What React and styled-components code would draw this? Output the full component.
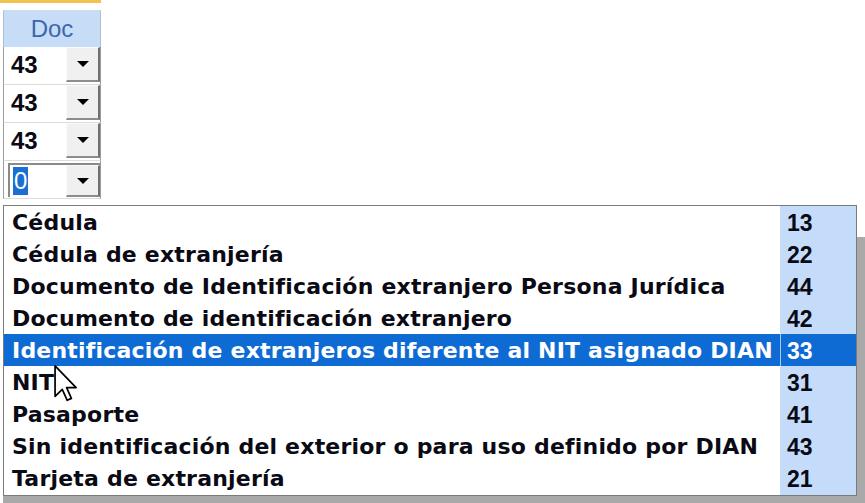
import styled, { createGlobalStyle } from "styled-components";

const GlobalStyle = createGlobalStyle`
  html, body {
    margin: 0;
    padding: 0;
    background: #fff;
  }
  body {
    font-family: "Liberation Sans", Arial, sans-serif;
  }
`;

const Screen = styled.div`
  position: relative;
  width: 865px;
  height: 503px;
  overflow: hidden;
  background: #fff;
`;

const Column = styled.div`
  width: 101px;
  border-top: 3px solid #f1c24f;
  padding-top: 7px;
`;

const HeaderCell = styled.div`
  box-sizing: border-box;
  height: 37px;
  margin-left: 3px;
  border-left: 1px solid #aebfd4;
  border-right: 1px solid #aebfd4;
  border-top: 1px solid #d3dbe5;
  background: #c7ddf7;
  display: flex;
  align-items: center;
  justify-content: center;
  font-size: 24px;
  color: #3b67ad;
`;

const Row = styled.div`
  box-sizing: border-box;
  height: 38px;
  width: 98px;
  margin-left: 3px;
  border-left: 1px solid #9c9c9c;
  border-right: 1px solid #9c9c9c;
  border-bottom: 1px solid #dcdcdc;
  display: flex;
`;

const Combo = styled.div`
  flex: 1;
  display: flex;
  margin: ${({ sunken }) => (sunken ? "2px 0 1px 4px" : "0 0 2px 0")};
  border-top: ${({ sunken }) => (sunken ? "2px solid #8a8a8a" : "none")};
  border-left: ${({ sunken }) => (sunken ? "2px solid #8a8a8a" : "none")};
`;

const Field = styled.div`
  flex: 1;
  display: flex;
  align-items: center;
  padding-left: ${({ sunken }) => (sunken ? "3px" : "7px")};
  font-size: 24px;
  font-weight: bold;
  color: #0a0a14;
`;

const Selected = styled.span`
  display: inline-block;
  line-height: 28px;
  padding: 0 1px;
  background: #1a6fd3;
  color: #fff;
  font-weight: normal;
`;

const DropButton = styled.div`
  box-sizing: border-box;
  width: 34px;
  background: #f0f0f0;
  border-top: 1px solid #fafafa;
  border-left: 1px solid #fafafa;
  border-right: 2px solid #707070;
  border-bottom: 2px solid #8c8c8c;
  display: flex;
  align-items: center;
  justify-content: center;
`;

const Arrow = styled.span`
  width: 0;
  height: 0;
  border-left: 6px solid transparent;
  border-right: 6px solid transparent;
  border-top: 6px solid #000;
`;

const DropList = styled.div`
  position: absolute;
  top: 205px;
  left: 3px;
  box-sizing: border-box;
  width: 854px;
  height: 291px;
  border: 1px solid #7b7b7b;
  background: #fff;
  box-shadow: 8px 32px 0 #a9a9a9, 0 8px 0 #a9a9a9;
`;

const Item = styled.div`
  display: grid;
  grid-template-columns: 1fr 76px;
  height: 32px;
  line-height: 32px;
  color: ${({ active }) => (active ? "#fff" : "#0a0a14")};
  background: ${({ active }) => (active ? "#0f6bd4" : "transparent")};
`;

const Name = styled.div`
  padding: 1px 0 0 8px;
  font-family: "DejaVu Sans", "Liberation Sans", sans-serif;
  font-size: 22px;
  font-weight: bold;
  letter-spacing: 0.2px;
  white-space: nowrap;
  overflow: hidden;
`;

const Code = styled.div`
  padding: 1px 0 0 6px;
  font-size: 23px;
  font-weight: bold;
  background: ${({ active }) => (active ? "#0f6bd4" : "#c4dcfa")};
  border-left: 1px solid ${({ active }) => (active ? "#a8c9f0" : "#c4dcfa")};
`;

const Cursor = styled.svg`
  position: absolute;
  left: 54px;
  top: 365px;
`;

const values = [
  { value: "43" },
  { value: "43" },
  { value: "43" },
  { value: "0", editing: true },
];

const docTypes = [
  { name: "Cédula", code: 13 },
  { name: "Cédula de extranjería", code: 22 },
  { name: "Documento de Identificación extranjero Persona Jurídica", code: 44 },
  { name: "Documento de identificación extranjero", code: 42 },
  {
    name: "Identificación de extranjeros diferente al NIT asignado DIAN",
    code: 33,
    active: true,
  },
  { name: "NIT", code: 31 },
  { name: "Pasaporte", code: 41 },
  { name: "Sin identificación del exterior o para uso definido por DIAN", code: 43 },
  { name: "Tarjeta de extranjería", code: 21 },
];

export default function App() {
  return (
    <Screen>
      <GlobalStyle />
      <Column>
        <HeaderCell>Doc</HeaderCell>
        {values.map((row, i) => (
          <Row key={i}>
            <Combo sunken={row.editing}>
              <Field sunken={row.editing}>
                {row.editing ? <Selected>{row.value}</Selected> : row.value}
              </Field>
              <DropButton>
                <Arrow />
              </DropButton>
            </Combo>
          </Row>
        ))}
      </Column>

      <DropList>
        {docTypes.map((doc) => (
          <Item key={doc.code} active={doc.active}>
            <Name>{doc.name}</Name>
            <Code active={doc.active}>{doc.code}</Code>
          </Item>
        ))}
      </DropList>

      <Cursor width="23" height="37" viewBox="0 0 12 19.5">
        <path
          d="M0.5 0.5 L0.5 16.5 L4.3 12.8 L6.9 18.6 L9.1 17.6 L6.6 11.9 L11.6 11.9 Z"
          fill="#fff"
          stroke="#000"
          strokeWidth="0.9"
          strokeLinejoin="round"
        />
      </Cursor>
    </Screen>
  );
}
